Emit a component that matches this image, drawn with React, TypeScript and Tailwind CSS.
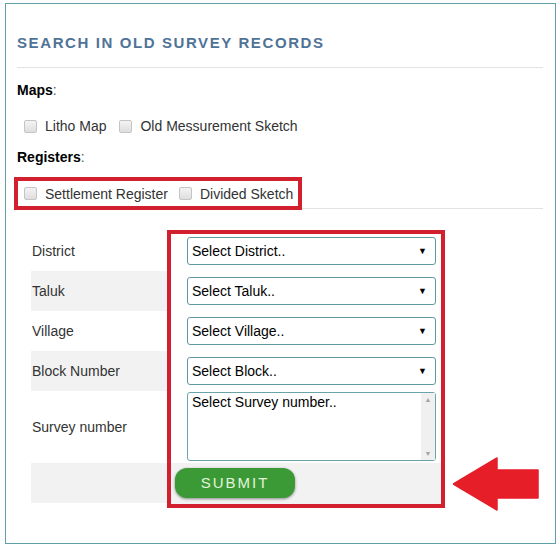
import React from "react";

const font = { fontFamily: '"Liberation Sans", Arial, sans-serif' };

const Check = ({ label }: { label: string }) => (
  <label className="flex items-center text-[14px] text-[#333] leading-5">
    <span className="inline-block w-[13px] h-[13px] rounded-[2px] border border-[#c4c4c4] bg-gradient-to-b from-[#f4f4f4] to-[#dedede] mr-[8px]" />
    {label}
  </label>
);

const SelectBox = ({ text }: { text: string }) => (
  <div className="h-[28px] w-[249px] border border-[#5f9aa2] rounded-[3px] bg-white flex items-center justify-between pl-[4px] pr-[8px] text-[14px] text-black">
    <span>{text}</span>
    <span className="text-[9px] leading-none">▼</span>
  </div>
);

const rows = [
  { label: "District", h: "h-10", bg: "bg-white" },
  { label: "Taluk", h: "h-10", bg: "bg-[#f2f2f2]" },
  { label: "Village", h: "h-10", bg: "bg-white" },
  { label: "Block Number", h: "h-10", bg: "bg-[#f2f2f2]" },
  { label: "Survey number", h: "h-[72px]", bg: "bg-white" },
  { label: "", h: "h-10", bg: "bg-[#f2f2f2]" },
];

export default function App() {
  return (
    <div className="w-[560px] h-[548px] bg-white pt-[3px] pl-[5px] relative" style={font}>
      <div className="w-[551px] h-[541px] border border-[#5f9fa8] pl-[11px] pr-[11px] pt-[29px]">
        <h2 className="text-[15px] leading-5 font-bold tracking-[1.6px] text-[#4f7397]">
          SEARCH IN OLD SURVEY RECORDS
        </h2>
        <div className="mt-[14px] border-t border-[#e2e2e2] mr-[1px]" />
        <div className="mt-[12px] text-[14px] leading-5 font-bold text-black">
          Maps<span className="font-normal text-[#555]">:</span>
        </div>
        <div className="mt-[16px] pl-[7px] flex items-center gap-[13px]">
          <Check label="Litho Map" />
          <Check label="Old Messurement Sketch" />
        </div>
        <div className="mt-[11px] text-[14px] leading-5 font-bold text-black">
          Registers<span className="font-normal text-[#555]">:</span>
        </div>
        <div className="relative z-10 mt-[10px] -ml-[3px] w-[288px] h-[33px] border-4 border-[#d3202e] bg-white flex items-center pl-[6px] gap-[11px]">
          <Check label="Settlement Register" />
          <Check label="Divided Sketch" />
        </div>
        <div className="-mt-[2px] border-t border-[#e2e2e2] mr-[1px]" />

        <div className="mt-[21px] ml-[14px] flex">
          <div className="w-[136px] pt-[1px]">
            {rows.map((r, i) => (
              <div key={i} className={`${r.h} ${r.bg} flex items-center pl-[1px] text-[14px] text-[#333]`}>
                {r.label}
              </div>
            ))}
          </div>
          <div className="w-[278px] h-[278px] border-4 border-[#d3202e] bg-white flex flex-col">
            <div className="pl-[16px] pr-[5px] pt-[3px] flex flex-col gap-[12px]">
              <SelectBox text="Select District.." />
              <SelectBox text="Select Taluk.." />
              <SelectBox text="Select Village.." />
              <SelectBox text="Select Block.." />
            </div>
            <div className="pl-[16px] pr-[5px] mt-[7px]">
              <div className="h-[69px] w-[249px] border border-[#6aa3aa] rounded-[3px] bg-white flex">
                <div className="flex-1 pl-[4px] pt-[1px] text-[14px] leading-4 text-black">
                  Select Survey number..
                </div>
                <div className="w-[14px] bg-[#f0f0f0] flex flex-col justify-between items-center py-[3px] text-[7px] text-[#a3a3a3] leading-none">
                  <span>▲</span>
                  <span>▼</span>
                </div>
              </div>
            </div>
            <div className="mt-[2px] flex-1 bg-[#f2f2f2] pl-[4px] pt-[5px]">
              <button className="w-[120px] h-[30px] rounded-[12px] bg-[#3b9a36] shadow-[0_1px_3px_rgba(0,0,0,0.45)] text-[15px] tracking-[2px] text-[#e3f3dc]">
                SUBMIT
              </button>
            </div>
          </div>
        </div>
      </div>
      <svg className="absolute left-[453px] top-[457px]" width="86" height="54" viewBox="0 0 86 54">
        <polygon points="0,27 44,1 44,13 85,13 85,41 44,41 44,53" fill="#e61e28" stroke="#e61e28" strokeWidth="1.5" strokeLinejoin="round" />
      </svg>
    </div>
  );
}
